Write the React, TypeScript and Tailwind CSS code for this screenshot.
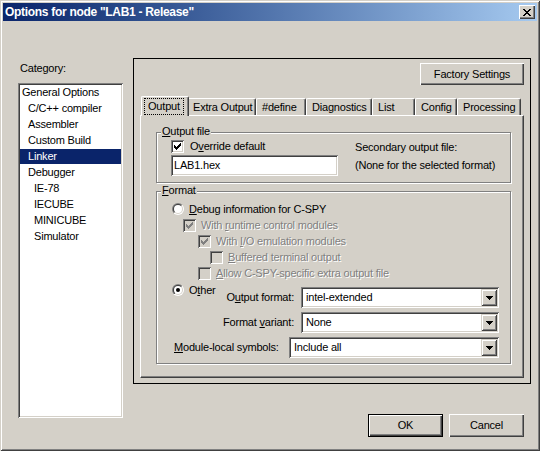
import { useId } from 'react';

const SUNKEN =
  'shadow-[inset_1px_1px_#808080,inset_-1px_-1px_#fff,inset_2px_2px_#404040,inset_-2px_-2px_#d4d0c8]';
const RAISED = 'shadow-[inset_1px_1px_#fff,inset_-1px_-1px_#404040,inset_-2px_-2px_#808080]';
const RAISED_SMALL =
  'shadow-[inset_1px_1px_#d4d0c8,inset_-1px_-1px_#404040,inset_2px_2px_#fff,inset_-2px_-2px_#808080]';
const DISABLED = 'text-[#808080] [text-shadow:1px_1px_0_#fff]';

const CATEGORIES: [string, number][] = [
  ['General Options', 0],
  ['C/C++ compiler', 1],
  ['Assembler', 1],
  ['Custom Build', 1],
  ['Linker', 1],
  ['Debugger', 1],
  ['IE-78', 2],
  ['IECUBE', 2],
  ['MINICUBE', 2],
  ['Simulator', 2],
];
const INDENT = ['pl-[2px]', 'pl-[8px]', 'pl-[14px]'];

const TABS: { label: string; width: string }[] = [
  { label: 'Output', width: 'w-[44px]' },
  { label: 'Extra Output', width: 'w-[69px]' },
  { label: '#define', width: 'w-[50px]' },
  { label: 'Diagnostics', width: 'w-[66px]' },
  { label: 'List', width: 'w-[43px]' },
  { label: 'Config', width: 'w-[42px]' },
  { label: 'Processing', width: 'w-[64px]' },
];

function Key({ children }: { children: string }) {
  return <span className="underline underline-offset-[1px]">{children}</span>;
}

function CheckBox({ checked, disabled }: { checked?: boolean; disabled?: boolean }) {
  return (
    <span
      className={`flex h-[13px] w-[13px] shrink-0 items-center justify-center ${SUNKEN} ${
        disabled ? 'bg-[#d4d0c8]' : 'bg-white'
      }`}
    >
      {checked && (
        <svg width="7" height="7" viewBox="0 0 7 7" shapeRendering="crispEdges">
          <path
            fill={disabled ? '#808080' : '#000'}
            d="M6 0h1v1h-1z M5 1h2v1h-2z M0 2h1v1h-1z M4 2h3v1h-3z M0 3h2v1h-2z M3 3h3v1h-3z M0 4h5v1h-5z M1 5h3v1h-3z M2 6h1v1h-1z"
          />
        </svg>
      )}
    </span>
  );
}

function Radio({ checked }: { checked?: boolean }) {
  const id = useId().replace(/:/g, '');
  return (
    <svg width="12" height="12" viewBox="0 0 12 12" className="shrink-0">
      <defs>
        <linearGradient id={`o${id}`} x1="0" y1="0" x2="1" y2="1">
          <stop offset="0.5" stopColor="#808080" />
          <stop offset="0.5" stopColor="#fff" />
        </linearGradient>
        <linearGradient id={`i${id}`} x1="0" y1="0" x2="1" y2="1">
          <stop offset="0.5" stopColor="#404040" />
          <stop offset="0.5" stopColor="#d4d0c8" />
        </linearGradient>
      </defs>
      <circle cx="6" cy="6" r="6" fill={`url(#o${id})`} />
      <circle cx="6" cy="6" r="5" fill={`url(#i${id})`} />
      <circle cx="6" cy="6" r="4" fill="#fff" />
      {checked && <circle cx="6" cy="6" r="2" fill="#000" />}
    </svg>
  );
}

function ComboBox({ value, width }: { value: string; width: string }) {
  return (
    <div className={`flex h-[21px] ${width} items-center bg-white ${SUNKEN}`}>
      <span className="flex-1 truncate pl-[5px]">{value}</span>
      <span className={`mr-[2px] flex h-[17px] w-[16px] items-center justify-center bg-[#d4d0c8] ${RAISED_SMALL}`}>
        <svg width="7" height="4" viewBox="0 0 7 4" shapeRendering="crispEdges">
          <path d="M0 0h7v1h-7z M1 1h5v1h-5z M2 2h3v1h-3z M3 3h1v1h-1z" fill="#000" />
        </svg>
      </span>
    </div>
  );
}

function GroupBox({
  label,
  className,
  children,
}: {
  label: React.ReactNode;
  className: string;
  children: React.ReactNode;
}) {
  return (
    <div
      className={`relative ml-[15px] w-[355px] border border-[#808080] shadow-[inset_1px_1px_#fff,1px_1px_#fff] ${className}`}
    >
      <span className="absolute -top-[8px] left-[4px] bg-[#d4d0c8] px-[1px] leading-[13px]">{label}</span>
      {children}
    </div>
  );
}

function OutputTab() {
  return (
    <div className="h-[263px] w-[384px] border-t border-l border-white border-r border-b border-r-[#404040] border-b-[#404040] shadow-[inset_-1px_-1px_#808080]">
      <GroupBox label={<><Key>O</Key>utput file</>} className="mt-[16px] h-[51px]">
        <div className="flex">
          <div className="pl-[14px] pt-[7px]">
            <div className="flex h-[13px] items-center gap-[6px]">
              <CheckBox checked />
              <span>
                O<Key>v</Key>erride default
              </span>
            </div>
            <div className={`mt-[2px] flex h-[21px] w-[167px] items-center bg-white pl-[3px] ${SUNKEN}`}>
              LAB1.hex
            </div>
          </div>
          <div className="ml-[17px] flex flex-col gap-[4px] pt-[7px] leading-[14px]">
            <span>Secondary output file:</span>
            <span>(None for the selected format)</span>
          </div>
        </div>
      </GroupBox>

      <GroupBox label={<><Key>F</Key>ormat</>} className="mt-[8px] h-[173px]">
        <div className="pt-[9px]">
          <div className="flex h-[16px] items-center gap-[5px] pl-[15px]">
            <Radio />
            <span>
              <Key>D</Key>ebug information for C-SPY
            </span>
          </div>
          <div className="flex h-[16px] items-center gap-[5px] pl-[26px]">
            <CheckBox checked disabled />
            <span className={DISABLED}>
              With <Key>r</Key>untime control modules
            </span>
          </div>
          <div className="flex h-[16px] items-center gap-[5px] pl-[41px]">
            <CheckBox checked disabled />
            <span className={DISABLED}>
              With <Key>I</Key>/O emulation modules
            </span>
          </div>
          <div className="flex h-[16px] items-center gap-[5px] pl-[53px]">
            <CheckBox disabled />
            <span className={DISABLED}>
              <Key>B</Key>uffered terminal output
            </span>
          </div>
          <div className="flex h-[16px] items-center gap-[5px] pl-[41px]">
            <CheckBox disabled />
            <span className={DISABLED}>
              <Key>A</Key>llow C-SPY-specific extra output file
            </span>
          </div>

          <div className="flex">
            <div className="mt-[1px] flex h-[16px] items-center gap-[5px] pl-[15px]">
              <Radio checked />
              <span>
                O<Key>t</Key>her
              </span>
            </div>
            <div className="mt-[6px] mr-[11px] ml-auto flex flex-col gap-[4px]">
              <div className="flex h-[21px] items-center justify-end gap-[7px]">
                <span>
                  O<Key>u</Key>tput format:
                </span>
                <ComboBox value="intel-extended" width="w-[198px]" />
              </div>
              <div className="flex h-[21px] items-center justify-end gap-[7px]">
                <span>
                  Format <Key>v</Key>ariant:
                </span>
                <ComboBox value="None" width="w-[198px]" />
              </div>
            </div>
          </div>

          <div className="mt-[4px] flex h-[21px] items-center pl-[17px]">
            <span>
              <Key>M</Key>odule-local symbols:
            </span>
            <div className="mr-[11px] ml-auto">
              <ComboBox value="Include all" width="w-[210px]" />
            </div>
          </div>
        </div>
      </GroupBox>
    </div>
  );
}

export default function App() {
  return (
    <div className="font-['Liberation_Sans',Arial,sans-serif] text-[11px] leading-[13px] tracking-[-0.2px] text-black">
      <div className="flex h-[451px] w-[540px] flex-col bg-[#d4d0c8] p-[3px] shadow-[inset_1px_1px_#d4d0c8,inset_-1px_-1px_#404040,inset_2px_2px_#fff,inset_-2px_-2px_#808080]">
        {/* title bar */}
        <div className="flex h-[18px] items-center bg-linear-to-r from-[#0a246a] to-[#a6caf0] pl-[2px]">
          <span className="text-[12px] font-bold tracking-[-0.3px] text-white">
            Options for node &quot;LAB1 - Release&quot;
          </span>
          <span className={`mr-[2px] ml-auto flex h-[14px] w-[16px] items-center justify-center bg-[#d4d0c8] ${RAISED}`}>
            <svg width="8" height="7" viewBox="0 0 8 7" shapeRendering="crispEdges">
              <path
                fill="#000"
                d="M0 0h2v1h-2z M6 0h2v1h-2z M1 1h2v1h-2z M5 1h2v1h-2z M2 2h4v1h-4z M3 3h2v1h-2z M2 4h4v1h-4z M1 5h2v1h-2z M5 5h2v1h-2z M0 6h2v1h-2z M6 6h2v1h-2z"
              />
            </svg>
          </span>
        </div>

        <div className="flex">
          {/* category list */}
          <div className="mt-[41px] ml-[15px] w-[105px]">
            <div className="h-[13px] pl-[2px]">Category:</div>
            <div className={`mt-[8px] h-[335px] w-[105px] bg-white p-[2px] ${SUNKEN}`}>
              {CATEGORIES.map(([name, level]) => (
                <div key={name} className="h-[16px]">
                  <div
                    className={`flex h-[15px] items-center ${INDENT[level]} ${
                      name === 'Linker' ? 'bg-[#0a246a] text-white' : ''
                    }`}
                  >
                    {name}
                  </div>
                </div>
              ))}
            </div>
          </div>

          {/* options frame */}
          <div className="mt-[37px] ml-[10px] w-[398px]">
            <div className="flex h-[326px] flex-col border border-black">
              <button
                className={`mt-[4px] mr-[6px] flex h-[22px] w-[104px] items-center justify-center self-end bg-[#d4d0c8] ${RAISED}`}
              >
                Factory Settings
              </button>
              <div className="mt-[11px] ml-[6px] flex h-[19px] items-end pl-[3px]">
                {TABS.map((tab, i) =>
                  i === 0 ? (
                    <div
                      key={tab.label}
                      className="relative z-10 -mx-[2px] -mb-[1px] flex h-[20px] w-[48px] items-start rounded-t-[2px] border-t border-l border-r border-white border-r-[#404040] bg-[#d4d0c8] pt-[1px] pl-[2px] shadow-[inset_-1px_0_#808080]"
                    >
                      <span className="border border-dotted border-black px-[3px] py-[1px]">{tab.label}</span>
                    </div>
                  ) : (
                    <div
                      key={tab.label}
                      className={`flex h-[17px] ${tab.width} shrink-0 items-center rounded-t-[2px] border-t border-l border-r border-white border-r-[#404040] pl-[5px] whitespace-nowrap shadow-[inset_-1px_0_#808080]`}
                    >
                      {tab.label}
                    </div>
                  )
                )}
              </div>
              <div className="ml-[6px]">
                <OutputTab />
              </div>
            </div>

            <div className="mt-[30px] flex justify-end gap-[6px] pr-[7px]">
              <button className="h-[23px] w-[75px] border border-black bg-[#d4d0c8] shadow-[inset_1px_1px_#fff,inset_-1px_-1px_#404040,inset_-2px_-2px_#808080]">
                OK
              </button>
              <button className={`h-[23px] w-[75px] bg-[#d4d0c8] ${RAISED}`}>Cancel</button>
            </div>
          </div>
        </div>
      </div>
    </div>
  );
}
